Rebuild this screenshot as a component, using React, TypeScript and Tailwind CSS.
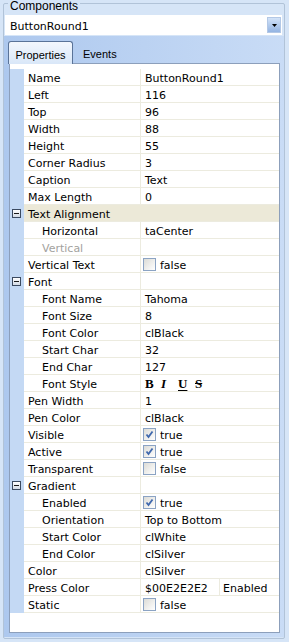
import React from 'react';

type Row = {
  name: string;
  value?: string;
  sub?: boolean;
  cat?: boolean;
  selected?: boolean;
  disabled?: boolean;
  check?: boolean;
  style?: boolean;
  press?: boolean;
};

const rows: Row[] = [
  { name: 'Name', value: 'ButtonRound1' },
  { name: 'Left', value: '116' },
  { name: 'Top', value: '96' },
  { name: 'Width', value: '88' },
  { name: 'Height', value: '55' },
  { name: 'Corner Radius', value: '3' },
  { name: 'Caption', value: 'Text' },
  { name: 'Max Length', value: '0' },
  { name: 'Text Alignment', cat: true, selected: true },
  { name: 'Horizontal', value: 'taCenter', sub: true },
  { name: 'Vertical', sub: true, disabled: true },
  { name: 'Vertical Text', check: false },
  { name: 'Font', cat: true },
  { name: 'Font Name', value: 'Tahoma', sub: true },
  { name: 'Font Size', value: '8', sub: true },
  { name: 'Font Color', value: 'clBlack', sub: true },
  { name: 'Start Char', value: '32', sub: true },
  { name: 'End Char', value: '127', sub: true },
  { name: 'Font Style', style: true, sub: true },
  { name: 'Pen Width', value: '1' },
  { name: 'Pen Color', value: 'clBlack' },
  { name: 'Visible', check: true },
  { name: 'Active', check: true },
  { name: 'Transparent', check: false },
  { name: 'Gradient', cat: true },
  { name: 'Enabled', check: true, sub: true },
  { name: 'Orientation', value: 'Top to Bottom', sub: true },
  { name: 'Start Color', value: 'clWhite', sub: true },
  { name: 'End Color', value: 'clSilver', sub: true },
  { name: 'Color', value: 'clSilver' },
  { name: 'Press Color', press: true },
  { name: 'Static', check: false },
];

const CheckBox: React.FC<{ checked: boolean }> = ({ checked }) => (
  <span className="flex h-[13px] w-[13px] items-center justify-center border border-[#8ba3c3] bg-gradient-to-br from-[#dcdcd7] to-[#ffffff]">
    {checked && (
      <svg width="11" height="11" viewBox="0 0 11 11">
        <path d="M2.5 5.5 L4.5 8 L8.5 2.5" fill="none" stroke="#3f68ad" strokeWidth="1.8" />
      </svg>
    )}
  </span>
);

const MinusBox = () => (
  <span className="flex h-[9px] w-[9px] items-center justify-center border border-[#3b4a60] bg-gradient-to-b from-[#ffffff] to-[#d3dbe6]">
    <span className="h-px w-[5px] bg-[#1a1a1a]" />
  </span>
);

const GridRow: React.FC<{ row: Row }> = ({ row }) => {
  const nameText = (
    <span
      className={`${row.sub ? 'pl-[18px]' : 'pl-[4px]'} ${row.disabled ? 'text-[#a3a29e]' : 'text-black'} pt-[2px] whitespace-nowrap`}
    >
      {row.name}
    </span>
  );

  let value: React.ReactNode = null;
  if (row.check !== undefined) {
    value = (
      <div className="flex h-full items-center gap-[4px] pl-[2px]">
        <CheckBox checked={row.check} />
        <span className="pt-[3px]">{row.check ? 'true' : 'false'}</span>
      </div>
    );
  } else if (row.style) {
    value = (
      <div className="flex h-full items-center pl-[4px] pt-[1px] font-['Liberation_Serif',serif] text-[13px] font-bold leading-[16px]">
        <span className="w-[16px]">B</span>
        <span className="w-[17px] italic">I</span>
        <span className="w-[17px] underline underline-offset-2">U</span>
        <span className="w-[16px] line-through">S</span>
      </div>
    );
  } else if (row.press) {
    value = (
      <div className="flex h-full">
        <span className="w-[78px] pl-[4px] pt-[2px]">$00E2E2E2</span>
        <span className="w-px bg-[#ecebdf]" />
        <span className="pl-[3px] pt-[2px]">Enabled</span>
      </div>
    );
  } else if (row.value) {
    value = <span className="block pl-[4px] pt-[2px] whitespace-nowrap">{row.value}</span>;
  }

  return (
    <div className="flex h-[17px]">
      <div className="flex w-[14px] items-start bg-[#c4d9f4] pl-[2px] pt-[4px]">
        {row.cat && <MinusBox />}
      </div>
      {row.selected ? (
        <div className="flex h-[17px] flex-1 border-b border-[#ecebdf] bg-[#ece9d8]">{nameText}</div>
      ) : (
        <>
          <div className="flex h-[17px] w-[116px] border-b border-[#ecebdf]">{nameText}</div>
          <div className="h-[17px] w-px bg-[#ecebdf]" />
          <div className="h-[17px] flex-1 border-b border-[#ecebdf]">{value}</div>
        </>
      )}
    </div>
  );
};

export default function App() {
  return (
    <div className="h-[642px] w-[289px] overflow-hidden bg-[#d6e5f7] pt-[3px] pl-[3px] font-['DejaVu_Sans',sans-serif] text-[11px] leading-[16px] text-black">
      <div className="relative h-[636px] w-[282px] rounded-[2px] border border-[#b1c3d8]">
        <span className="absolute left-[4px] top-[-3px] bg-[#d6e5f7] px-[2px] font-['Liberation_Sans',sans-serif] text-[12px] leading-[11px] text-black">
          Components
        </span>

        <div className="ml-[1px] mt-[11px] flex h-[20px] w-[277px] items-center justify-between bg-white">
          <span className="pl-[5px] pt-[3px] whitespace-nowrap">ButtonRound1</span>
          <div className="mr-[1px] flex h-[16px] w-[14px] items-center justify-center border border-[#b3c8e6] bg-gradient-to-b from-[#d3e3f8] to-[#94b4e2]">
            <svg width="5" height="3" viewBox="0 0 5 3">
              <path d="M0 0 H5 L2.5 3 Z" fill="#000" />
            </svg>
          </div>
        </div>

        <div className="mt-[1px] h-[601px] bg-gradient-to-r from-[#adc8ee] to-[#c9dcf6]">
          <div className="flex h-[27px] items-end pl-[4px] font-['Liberation_Sans',sans-serif] text-[11px]">
            <div className="relative z-10 -mb-px flex h-[23px] w-[65px] items-center justify-center rounded-t-[3px] border border-b-0 border-[#5a7398] bg-gradient-to-b from-[#f3f7fd] to-[#d9e7f8] pt-[3px]">
              Properties
            </div>
            <div className="flex h-[22px] items-center pl-[10px] pr-[6px] pt-[3px]">Events</div>
          </div>

          <div className="ml-[5px] h-[570px] w-[271px] border border-[#8c9fbb] bg-white pt-[5px]">
            {rows.map((r) => (
              <GridRow key={r.name} row={r} />
            ))}
          </div>
        </div>
      </div>
    </div>
  );
}
